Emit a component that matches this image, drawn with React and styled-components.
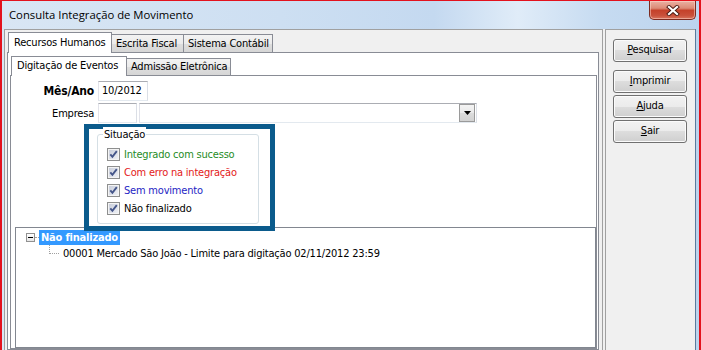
import React from 'react';
import styled, { createGlobalStyle } from 'styled-components';

const GlobalStyle = createGlobalStyle`
  html, body {
    margin: 0;
    padding: 0;
    background: #fff;
  }
  body {
    font-family: "DejaVu Sans Condensed", "DejaVu Sans", sans-serif;
    font-size: 11px;
    letter-spacing: -0.2px;
    color: #000;
  }
`;

const Window = styled.div`
  width: 701px;
  height: 350px;
  box-sizing: border-box;
  border: 2px solid #e3121d;
  border-top-width: 1px;
  border-bottom: none;
  padding: 0 3px 0 2px;
  background: linear-gradient(90deg, #d9e6f4 0%, #cddff2 40%, #c4d9f0 62%, #e0ecf8 74%, #c6dbf1 86%, #bcd4ee 100%);
  display: flex;
  flex-direction: column;
  overflow: hidden;
`;

const TitleBar = styled.div`
  height: 28px;
  flex-shrink: 0;
  display: flex;
  align-items: flex-start;
`;

const Title = styled.span`
  margin: 6px 0 0 5px;
  line-height: 16px;
  font-family: "Open Sans", "Noto Sans", sans-serif;
  font-size: 11.3px;
  letter-spacing: 0;
`;

const CloseButton = styled.div`
  margin-left: auto;
  width: 47px;
  height: 19px;
  box-sizing: border-box;
  border: 1px solid #7d2a1f;
  border-top: none;
  border-radius: 0 0 5px 5px;
  background: linear-gradient(#eab1a3 0%, #dc8a76 40%, #c5412a 52%, #c9503a 80%, #d9745c 100%);
  box-shadow: inset 0 0 0 1px rgba(255, 220, 210, 0.5);
  display: flex;
  align-items: center;
  justify-content: center;
`;

const Client = styled.div`
  flex: 1;
  display: flex;
  background: #f0f0f0;
  border-right: 1px solid #5b7a9c;
  min-height: 0;
`;

const LeftPanel = styled.div`
  width: 599px;
  flex-shrink: 0;
  box-sizing: border-box;
  border: 1px solid #a0a0a0;
  border-bottom: none;
  padding: 2px 3px 0 2px;
  display: flex;
  flex-direction: column;
`;

const RightPanel = styled.div`
  flex: 1;
  margin-left: 2px;
  border: 1px solid #a0a0a0;
  border-bottom: none;
  border-right: none;
  padding: 9px 0 0 7px;
  display: flex;
  flex-direction: column;
`;

const TabStrip = styled.div`
  display: flex;
  align-items: flex-end;
  height: ${(p) => p.$height}px;
  padding-left: 1px;
  position: relative;
  z-index: 1;
  flex-shrink: 0;
`;

const Tab = styled.div`
  width: ${(p) => p.$width}px;
  box-sizing: border-box;
  border: 1px solid #898c95;
  border-bottom: none;
  margin-left: ${(p) => (p.$active ? 0 : -1)}px;
  padding-left: ${(p) => (p.$active ? 5 : 4)}px;
  white-space: nowrap;
  ${(p) =>
    p.$active
      ? `
    height: ${p.$height + 1}px;
    margin-bottom: -1px;
    background: #fff;
    line-height: ${p.$height - 1}px;
  `
      : `
    height: ${p.$height - 2}px;
    background: linear-gradient(#f3f3f3 0%, #ebebeb 50%, #dedede 50%, #d6d6d6 100%);
    line-height: ${p.$height - 3}px;
  `}
  &:first-child {
    margin-left: 0;
  }
`;

const TabPage = styled.div`
  flex: 1;
  border: 1px solid #898c95;
  background: #fff;
  display: flex;
  flex-direction: column;
  min-height: 0;
  padding: ${(p) => p.$padding};
`;

const FormGrid = styled.div`
  display: grid;
  grid-template-columns: 84px auto;
  column-gap: 3px;
  row-gap: 2px;
  align-items: center;
`;

const Label = styled.span`
  text-align: right;
  font-weight: ${(p) => (p.$bold ? 700 : 400)};
  font-size: ${(p) => (p.$bold ? 12 : 11)}px;
  padding-right: 1px;
`;

const FieldRow = styled.div`
  display: flex;
  gap: 2px;
`;

const TextBox = styled.div`
  width: ${(p) => p.$width}px;
  height: 20px;
  box-sizing: border-box;
  border: 1px solid;
  border-color: #abadb3 #dbdfe6 #e3e9ef #e2e3ea;
  padding-left: 3px;
  line-height: 18px;
  background: #fff;
`;

const Combo = styled.div`
  width: 338px;
  height: 20px;
  box-sizing: border-box;
  border: 1px solid;
  border-color: #abadb3 #dbdfe6 #e3e9ef #e2e3ea;
  display: flex;
  justify-content: flex-end;
  padding: 0 1px 1px 0;
`;

const DropButton = styled.div`
  width: 16px;
  height: 18px;
  box-sizing: border-box;
  border: 1px solid #9a9a9a;
  background: linear-gradient(#f4f4f4 0%, #e9e9e9 50%, #dcdcdc 50%, #d2d2d2 100%);
  display: flex;
  align-items: center;
  justify-content: center;
`;

const Highlight = styled.div`
  position: relative;
  z-index: 2;
  width: 191px;
  height: 107px;
  box-sizing: border-box;
  margin: 1px 0 -4px 73px;
  border: 5px solid #0b5b8c;
  background: #fff;
  padding: 5px 0 0 8px;
`;

const GroupBox = styled.div`
  width: 162px;
  height: 90px;
  box-sizing: border-box;
  border: 1px solid #d5dfe5;
  border-radius: 3px;
  padding-left: 9px;
`;

const GroupTitle = styled.span`
  display: block;
  width: fit-content;
  margin: -8px 0 0 -4px;
  padding: 0 1px;
  line-height: 16px;
  background: #fff;
`;

const CheckList = styled.div`
  padding-top: 2px;
  display: flex;
  flex-direction: column;
`;

const CheckRow = styled.div`
  height: 18px;
  display: flex;
  align-items: center;
  gap: 4px;
  color: ${(p) => p.$color};
  white-space: nowrap;
`;

const Tree = styled.div`
  flex: 1;
  margin-left: 4px;
  border: 1px solid #828790;
  background: #fff;
  padding-top: 1px;
`;

const TreeRow = styled.div`
  height: 16px;
  display: flex;
  align-items: center;
  padding-left: ${(p) => p.$indent}px;
  white-space: nowrap;
`;

const Expander = styled.span`
  width: 9px;
  height: 9px;
  box-sizing: border-box;
  border: 1px solid #919191;
  background: linear-gradient(#fff, #e6e6e6);
  display: flex;
  align-items: center;
  justify-content: center;
  &::after {
    content: '';
    width: 5px;
    height: 1px;
    background: #000;
  }
`;

const HLine = styled.span`
  width: 4px;
  border-top: 1px dotted #a0a0a0;
`;

const Elbow = styled.span`
  width: 9px;
  height: 8px;
  align-self: flex-start;
  border-left: 1px dotted #a0a0a0;
  border-bottom: 1px dotted #a0a0a0;
  margin-right: 2px;
`;

const NodeLabel = styled.span`
  line-height: 15px;
  padding: 0 2px;
  font-weight: ${(p) => (p.$selected ? 700 : 400)};
  background: ${(p) => (p.$selected ? '#3399ff' : 'transparent')};
  color: ${(p) => (p.$selected ? '#fff' : '#000')};
`;

const Button = styled.div`
  width: 74px;
  height: 23px;
  box-sizing: border-box;
  margin-bottom: ${(p) => p.$gap}px;
  border: 1px solid #707070;
  border-radius: 3px;
  background: linear-gradient(#f2f2f2 0%, #ebebeb 50%, #dddddd 50%, #cfcfcf 100%);
  box-shadow: inset 0 0 0 1px #fbfbfb;
  text-align: center;
  line-height: 20px;
`;

const Check = () => (
  <svg width="13" height="13" viewBox="0 0 13 13">
    <defs>
      <linearGradient id="cbfill" x1="0" y1="0" x2="1" y2="1">
        <stop offset="0" stopColor="#c9cedb" />
        <stop offset="1" stopColor="#eef0f5" />
      </linearGradient>
    </defs>
    <rect x="0.5" y="0.5" width="12" height="12" fill="#f4f4f4" stroke="#8e8f8f" />
    <rect x="2" y="2" width="9" height="9" fill="url(#cbfill)" />
    <path d="M3.3 6.4 L5.4 8.8 L9.8 3.2" fill="none" stroke="#45568a" strokeWidth="1.9" />
  </svg>
);

const CloseGlyph = () => (
  <svg width="14" height="11" viewBox="0 0 14 11">
    <path d="M3 2 L11 9 M11 2 L3 9" stroke="#4a1a12" strokeWidth="4" strokeLinecap="square" />
    <path d="M3 2 L11 9 M11 2 L3 9" stroke="#fff" strokeWidth="2.2" strokeLinecap="square" />
  </svg>
);

const situacoes = [
  { text: 'Integrado com sucesso', color: '#1f8c1f' },
  { text: 'Com erro na integração', color: '#e31919' },
  { text: 'Sem movimento', color: '#1e1ec4' },
  { text: 'Não finalizado', color: '#000' },
];

const App = () => (
  <>
    <GlobalStyle />
    <Window>
      <TitleBar>
        <Title>Consulta Integração de Movimento</Title>
        <CloseButton>
          <CloseGlyph />
        </CloseButton>
      </TitleBar>
      <Client>
        <LeftPanel>
          <TabStrip $height={20}>
            <Tab $active $height={20} $width={104}>Recursos Humanos</Tab>
            <Tab $height={20} $width={73}>Escrita Fiscal</Tab>
            <Tab $height={20} $width={90}>Sistema Contábil</Tab>
          </TabStrip>
          <TabPage $padding="3px 1px 0 2px">
            <TabStrip $height={19}>
              <Tab $active $height={19} $width={116}>Digitação de Eventos</Tab>
              <Tab $height={19} $width={105}>Admissão Eletrônica</Tab>
            </TabStrip>
            <TabPage $padding="5px 0 0 0">
              <FormGrid>
                <Label $bold>Mês/Ano</Label>
                <TextBox $width={50}>10/2012</TextBox>
                <Label>Empresa</Label>
                <FieldRow>
                  <TextBox $width={39} />
                  <Combo>
                    <DropButton>
                      <svg width="7" height="4" viewBox="0 0 7 4">
                        <path d="M0 0 H7 L3.5 4 Z" fill="#000" />
                      </svg>
                    </DropButton>
                  </Combo>
                </FieldRow>
              </FormGrid>
              <Highlight>
                <GroupBox>
                  <GroupTitle>Situação</GroupTitle>
                  <CheckList>
                    {situacoes.map((s) => (
                      <CheckRow key={s.text} $color={s.color}>
                        <Check />
                        {s.text}
                      </CheckRow>
                    ))}
                  </CheckList>
                </GroupBox>
              </Highlight>
              <Tree>
                <TreeRow $indent={10}>
                  <Expander />
                  <HLine />
                  <NodeLabel $selected>Não finalizado</NodeLabel>
                </TreeRow>
                <TreeRow $indent={33}>
                  <Elbow />
                  <NodeLabel>00001 Mercado São João - Limite para digitação 02/11/2012 23:59</NodeLabel>
                </TreeRow>
              </Tree>
            </TabPage>
          </TabPage>
        </LeftPanel>
        <RightPanel>
          <Button $gap={8}><u>P</u>esquisar</Button>
          <Button $gap={2}><u>I</u>mprimir</Button>
          <Button $gap={2}><u>A</u>juda</Button>
          <Button $gap={2}><u>S</u>air</Button>
        </RightPanel>
      </Client>
    </Window>
  </>
);

export default App;
